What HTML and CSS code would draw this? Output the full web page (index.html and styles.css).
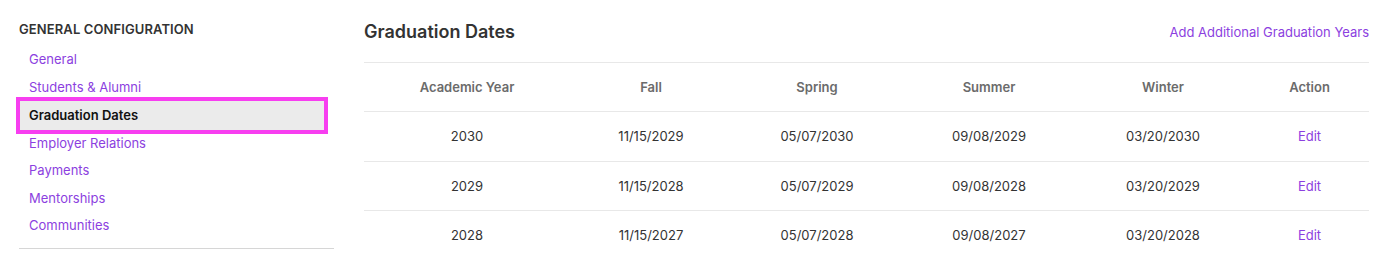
FILE: index.html
```html
<!DOCTYPE html>
<html lang="en">
<head>
<meta charset="utf-8">
<title>Graduation Dates</title>
<link rel="stylesheet" href="styles.css">
</head>
<body>
<div class="page">
  <aside class="sidebar">
    <h2 class="side-title">GENERAL CONFIGURATION</h2>
    <nav class="side-nav">
      <a class="side-link" href="#">General</a>
      <a class="side-link" href="#">Students &amp; Alumni</a>
      <a class="side-link active" href="#">Graduation Dates</a>
      <a class="side-link" href="#">Employer Relations</a>
      <a class="side-link" href="#">Payments</a>
      <a class="side-link" href="#">Mentorships</a>
      <a class="side-link" href="#">Communities</a>
    </nav>
    <div class="side-divider"></div>
  </aside>
  <main class="main">
    <div class="main-head">
      <h1 class="main-title">Graduation Dates</h1>
      <a class="add-link" href="#">Add Additional Graduation Years</a>
    </div>
    <table class="dates">
      <colgroup>
        <col class="c1"><col class="c2"><col class="c3"><col class="c4"><col class="c5"><col class="c6">
      </colgroup>
      <thead>
        <tr><th>Academic Year</th><th>Fall</th><th>Spring</th><th>Summer</th><th>Winter</th><th>Action</th></tr>
      </thead>
      <tbody>
        <tr><td>2030</td><td>11/15/2029</td><td>05/07/2030</td><td>09/08/2029</td><td>03/20/2030</td><td><a class="edit" href="#">Edit</a></td></tr>
        <tr><td>2029</td><td>11/15/2028</td><td>05/07/2029</td><td>09/08/2028</td><td>03/20/2029</td><td><a class="edit" href="#">Edit</a></td></tr>
        <tr><td>2028</td><td>11/15/2027</td><td>05/07/2028</td><td>09/08/2027</td><td>03/20/2028</td><td><a class="edit" href="#">Edit</a></td></tr>
      </tbody>
    </table>
  </main>
</div>
</body>
</html>
```
FILE: styles.css
```css
html, body {
  margin: 0;
  padding: 0;
  background: #ffffff;
}
body {
  font-family: Inter, "Liberation Sans", Arial, sans-serif;
  font-size: 13px;
  color: #333333;
  overflow: hidden;
}
a { text-decoration: none; }

.page {
  display: flex;
  gap: 30px;
  padding: 0 19px;
}

.sidebar {
  width: 315px;
  flex: none;
  padding-top: 20px;
}
.side-title {
  margin: 0 0 8px 0;
  font-size: 13px;
  line-height: 18px;
  font-weight: 600;
  color: #333333;
  letter-spacing: 0.1px;
}
.side-nav {
  display: flex;
  flex-direction: column;
}
.side-link {
  display: block;
  padding: 0 10px;
  height: 27.5px;
  line-height: 27.5px;
  color: #8c3fe0;
  font-size: 13px;
}
.side-link.active {
  height: 28.6px;
  line-height: 28.6px;
  margin: 0 10px 0 1px;
  padding-left: 9px;
  background: #ebebeb;
  color: #111111;
  font-weight: 600;
  box-shadow: 0 0 0 4px #f73ef0;
}
.side-divider {
  margin-top: 8px;
  height: 1px;
  background: #d6d6d6;
}

.main {
  flex: 1;
  padding-top: 20px;
}
.main-head {
  display: flex;
  justify-content: space-between;
  align-items: center;
  height: 24px;
  margin-bottom: 18px;
}
.main-title {
  margin: 0;
  font-size: 18px;
  line-height: 24px;
  font-weight: 600;
  color: #333333;
}
.add-link {
  color: #8c3fe0;
  font-size: 13px;
}

.dates {
  width: 100%;
  border-collapse: collapse;
  border-top: 1px solid #e8e8e8;
  table-layout: fixed;
}
.c1 { width: 206px; }
.c2 { width: 162px; }
.c3 { width: 170px; }
.c4 { width: 174px; }
.c5 { width: 174px; }
.c6 { width: auto; }
.dates th {
  padding: 15px 0;
  line-height: 18px;
  font-weight: 600;
  color: #6b6b6b;
  text-align: center;
  border-bottom: 1px solid #e8e8e8;
}
.dates td {
  padding: 15px 0;
  line-height: 18.5px;
  text-align: center;
  color: #333333;
  border-bottom: 1px solid #e8e8e8;
}
.edit {
  color: #8c3fe0;
}
```
